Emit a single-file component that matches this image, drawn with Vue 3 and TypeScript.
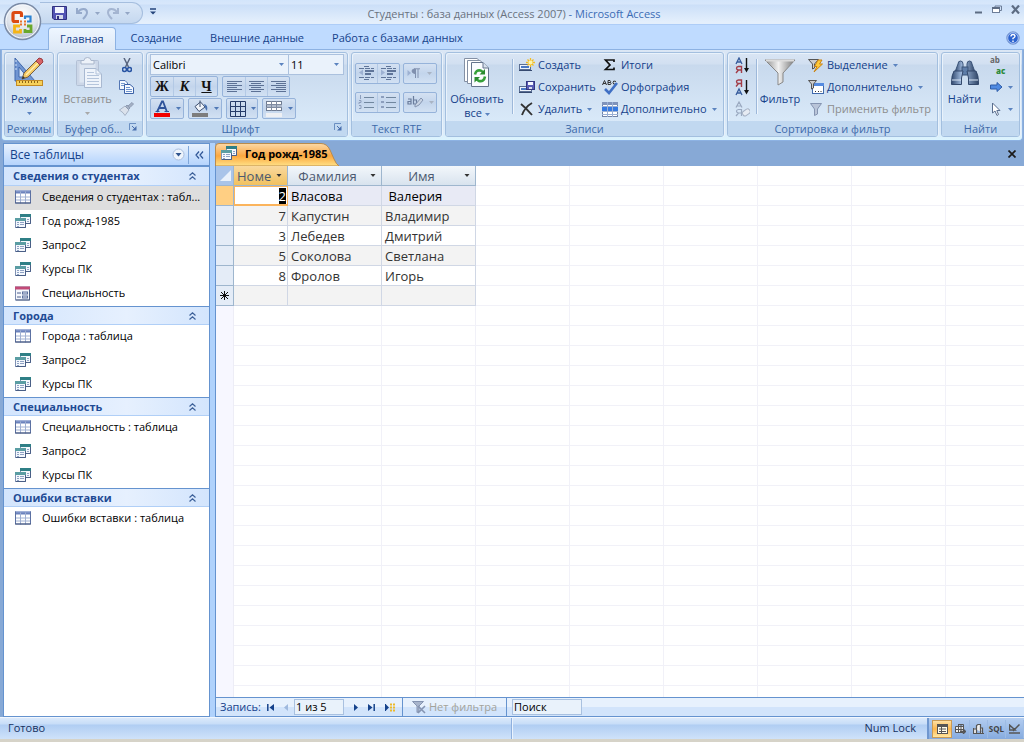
<script setup lang="ts">
import { ref } from 'vue'

interface NavItem { icon: string; text: string }
interface NavGroup { title: string; items: NavItem[] }

const tabs: string[] = ['Главная', 'Создание', 'Внешние данные', 'Работа с базами данных']
const activeTab = ref('Главная')

const groups: NavGroup[] = [
  {
    title: 'Сведения о студентах',
    items: [
      { icon: 'table', text: 'Сведения о студентах : табл...' },
      { icon: 'query', text: 'Год рожд-1985' },
      { icon: 'query', text: 'Запрос2' },
      { icon: 'query', text: 'Курсы ПК' },
      { icon: 'form', text: 'Специальность' },
    ],
  },
  {
    title: 'Города',
    items: [
      { icon: 'table', text: 'Города : таблица' },
      { icon: 'query', text: 'Запрос2' },
      { icon: 'query', text: 'Курсы ПК' },
    ],
  },
  {
    title: 'Специальность',
    items: [
      { icon: 'table', text: 'Специальность : таблица' },
      { icon: 'query', text: 'Запрос2' },
      { icon: 'query', text: 'Курсы ПК' },
    ],
  },
  {
    title: 'Ошибки вставки',
    items: [{ icon: 'table', text: 'Ошибки вставки : таблица' }],
  },
]
const selected = ref('0-0')

const columns: string[] = ['Номе', 'Фамилия', 'Имя']
const rows: [number, string, string][] = [
  [2, 'Власова', ' Валерия'],
  [7, 'Капустин', 'Владимир'],
  [3, 'Лебедев', 'Дмитрий'],
  [5, 'Соколова', 'Светлана'],
  [8, 'Фролов', 'Игорь'],
]
const position = ref('1 из 5')
const search = ref('Поиск')
</script>

<template>
  <div class="app">
    <svg class="defs" aria-hidden="true">
      <symbol id="i-table" viewBox="0 0 16 14">
        <rect x="0" y="0" width="16" height="13" fill="#fff" />
        <rect x="0" y="0" width="16" height="3" fill="#6c83bd" />
        <path d="M0 0.5H16" stroke="#8fa3d2" />
        <path d="M0 6.5H16M0 9.5H16M5.5 1V13M10.5 1V13" stroke="#9fb0d2" />
        <path d="M0.5 0V12.5H15.5V0" fill="none" stroke="#5c71a2" />
        <path d="M0 12.5H16" stroke="#46587f" />
      </symbol>
      <symbol id="i-query" viewBox="0 0 16 15">
        <rect x="5.5" y="0.5" width="10" height="9" fill="#f4f8fd" stroke="#7f91b3" />
        <rect x="5" y="0" width="11" height="3" fill="#2f7f86" />
        <path d="M12 5.5H14M12 7.5H14" stroke="#8fa2c4" />
        <path d="M15.5 3V9.5H11" fill="none" stroke="#4a5f86" />
        <rect x="0.5" y="4.5" width="10" height="9" fill="#f4f8fd" stroke="#7f91b3" />
        <rect x="0" y="4" width="11" height="3" fill="#5a9da3" />
        <path d="M2 8.5H4M5 8.5H9M2 10.5H4M5 10.5H9M2 12.5H4" stroke="#8fa2c4" />
        <path d="M10.5 7V13.5H1" fill="none" stroke="#4a5f86" />
      </symbol>
      <symbol id="i-form" viewBox="0 0 16 14">
        <rect x="0.5" y="0.5" width="14" height="13" fill="#f5f7fc" stroke="#7d8db0" />
        <rect x="0" y="0" width="15" height="3" fill="#c24a77" />
        <path d="M2 6.5H6M2 10.5H6" stroke="#4c5f8c" />
        <rect x="7.5" y="5.5" width="5" height="2" fill="#dfe6f3" stroke="#5d6f9b" />
        <rect x="7.5" y="9.5" width="5" height="2" fill="#dfe6f3" stroke="#5d6f9b" />
        <path d="M14.5 3V13.5H1" fill="none" stroke="#4e5f83" />
      </symbol>
      <symbol id="i-down" viewBox="0 0 5 3"><path d="M0 0H5L2.5 3Z" fill="currentColor" /></symbol>
      <symbol id="i-up2" viewBox="0 0 7 8">
        <path d="M0.5 3.5L3.5 0.8L6.5 3.5M0.5 7.5L3.5 4.8L6.5 7.5" fill="none" stroke="#3c6099" stroke-width="1.2" />
      </symbol>
      <symbol id="i-launch" viewBox="0 0 8 8">
        <path d="M0.5 7V0.5H7" fill="none" stroke="#6a8fc2" />
        <path d="M3 3L6 6" stroke="#486fae" /><path d="M7.5 3V7.5H3Z" fill="#486fae" />
      </symbol>
      <symbol id="i-floppy" viewBox="0 0 15 14">
        <path d="M0.5 0.5H14.5V13.5H2L0.5 12Z" fill="#5254b4" stroke="#30317f" />
        <rect x="3" y="1" width="9" height="6" fill="#f2f5ff" /><rect x="4" y="9" width="7" height="4" fill="#d5daea" />
        <rect x="5" y="10" width="2" height="3" fill="#30317f" />
      </symbol>
    </svg>

    <header class="titlebar">
      <div class="qat">
        <button class="bare" aria-label="Сохранить файл"><svg width="15" height="14"><use href="#i-floppy" /></svg></button>
        <button class="bare undo" aria-label="Отменить"><svg width="13" height="13" viewBox="0 0 13 13"><path d="M1 1V6H6" fill="none" stroke="#96aacb" stroke-width="2" /><path d="M2 5C5 1 11 1 11 5.5C11 8 9 10 7 12" fill="none" stroke="#96aacb" stroke-width="2" /></svg></button>
        <svg class="dim" width="5" height="3"><use href="#i-down" /></svg>
        <button class="bare" aria-label="Вернуть"><svg width="13" height="13" viewBox="0 0 13 13"><path d="M12 1V6H7" fill="none" stroke="#a4b5d1" stroke-width="2" /><path d="M11 5C8 1 2 1 2 5.5C2 8 4 10 6 12" fill="none" stroke="#a4b5d1" stroke-width="2" /></svg></button>
        <svg class="dim" width="5" height="3"><use href="#i-down" /></svg>
      </div>
      <button class="bare more" aria-label="Настройка панели"><svg width="6" height="7" viewBox="0 0 6 7"><path d="M0 1H6" stroke="#25457b" stroke-width="1.5" /><path d="M0 3.5H6L3 6.5Z" fill="#25457b" /></svg></button>
      <h1><span>Студенты : база данных (Access 2007)</span> - Microsoft Access</h1>
      <div class="window">
        <button class="bare" aria-label="Свернуть"><svg width="9" height="9" viewBox="0 0 9 9"><path d="M1 7.5H8" stroke="#5d6c83" stroke-width="2" /></svg></button>
        <button class="bare" aria-label="Восстановить"><svg width="10" height="9" viewBox="0 0 10 9"><path d="M3 2V1H9.5V5.5H8" fill="none" stroke="#6c7d98" /><rect x="0.5" y="3.5" width="7" height="4" fill="#fff" stroke="#6c7d98" /><path d="M0 3H8" stroke="#5d6c83" stroke-width="2" /></svg></button>
        <button class="bare" aria-label="Закрыть"><svg width="9" height="9" viewBox="0 0 9 9"><path d="M1 0.5L8 8.5M8 0.5L1 8.5" stroke="#5d6c83" stroke-width="2.2" /></svg></button>
      </div>
    </header>

    <button class="orb" aria-label="Кнопка Office">
      <svg width="39" height="39" viewBox="0 0 39 39">
        <defs><radialGradient id="orb" cx="50%" cy="30%" r="75%"><stop offset="0" stop-color="#fff" /><stop offset="0.6" stop-color="#dde2ea" /><stop offset="1" stop-color="#a4afc0" /></radialGradient></defs>
        <circle cx="19.5" cy="19.5" r="18" fill="url(#orb)" stroke="#7b8ba6" stroke-width="1.5" />
        <circle cx="19.5" cy="19.5" r="16.5" fill="none" stroke="#f6f9fe" />
        <path d="M16 19.5H11.5Q10 19.5 10 18V12Q10 10.5 11.5 10.5H17Q18.5 10.5 18.5 12V15" fill="none" stroke="#dc4a12" stroke-width="3.2" />
        <path d="M22 17V14.5H27.5V19.5H24" fill="none" stroke="#2d83d2" stroke-width="2.2" />
        <path d="M17 24H11.5V30H17.5V27" fill="none" stroke="#f5b417" stroke-width="2.8" />
        <path d="M24 24H28V29.5H22V27" fill="none" stroke="#6aa82b" stroke-width="2.8" />
        <path d="M17 19.5H19M21 19.5H23M17 22.5H19M21 22.5H23" stroke="#e8722a" stroke-width="2" />
      </svg>
    </button>

    <nav class="tabs">
      <button v-for="t in tabs" :key="t" :class="{ active: t === activeTab }" @click="activeTab = t">{{ t }}</button>
      <button class="bare help" aria-label="Справка"><svg width="14" height="14" viewBox="0 0 14 14"><circle cx="7" cy="7" r="6.3" fill="#2c63cf" stroke="#8aa6d6" /><circle cx="7" cy="7" r="5.3" fill="none" stroke="#e4eeff" stroke-width="0.7" /><path d="M5 5.5Q5 3.5 7 3.5T9 5.3Q9 6.3 7 7.3V8.3M7 9.5V11" fill="none" stroke="#fff" stroke-width="1.4" /></svg></button>
    </nav>

    <div class="ribbon">
      <section class="grp modes">
        <div class="body">
          <button class="big">
            <svg width="32" height="32" viewBox="0 0 32 32"><path d="M2 1L22 24H2Z" fill="#7095d2" stroke="#4068ac" /><path d="M6 10L14 20H6Z" fill="#dae7f7" stroke="#4068ac" /><path d="M2 4H4M2 8H4M2 12H4" stroke="#d6e4f7" /><rect x="3.5" y="23.5" width="26" height="5" fill="#f6d05a" stroke="#c28a25" /><path d="M6.5 24V26M9.5 24V26M12.5 24V26M15.5 24V26M18.5 24V26M21.5 24V26M24.5 24V26" stroke="#8b6416" /><path d="M9 22L11 16L25 2L29 6L15 20Z" fill="#f3c763" stroke="#735e47" /><path d="M13 18L26 5" stroke="#fff0b0" stroke-width="1.5" /><path d="M23 4L27 8L30 5Q30 1 26 1Z" fill="#d66467" stroke="#9b3e43" /><path d="M9 22L10 19L12 21Z" fill="#333" /></svg>
            <span>Режим</span><svg class="arr" width="5" height="3"><use href="#i-down" /></svg>
          </button>
        </div>
        <footer>Режимы</footer>
      </section>

      <section class="grp clip">
        <div class="body">
          <button class="big off" disabled>
            <svg width="32" height="32" viewBox="0 0 32 32"><rect x="4.5" y="3.5" width="22" height="25" rx="1" fill="#ccd7e8" stroke="#b3c0d5" /><rect x="7.5" y="6.5" width="16" height="19" fill="#dde6f2" /><path d="M9 3.5H12Q12 0.5 15.5 0.5T19 3.5H22V7H9Z" fill="#edf2f9" stroke="#a9b6cb" /><path d="M12.5 11.5H24L29.5 17V30.5H12.5Z" fill="#eff4fb" stroke="#a9b9d1" /><path d="M24 11.5V17H29.5M15 15.5H22M15 18.5H27M15 21.5H27M15 24.5H27M15 27.5H27" fill="none" stroke="#b5c5dc" /></svg>
            <span>Вставить</span><svg class="arr" width="5" height="3"><use href="#i-down" /></svg>
          </button>
          <div class="tools">
            <button class="bare" aria-label="Вырезать"><svg width="10" height="15" viewBox="0 0 10 15"><path d="M2 0L6.5 9M8 0L3.5 9" stroke="#5a6780" stroke-width="1.5" /><circle cx="2.5" cy="11.5" r="2" fill="none" stroke="#2854a3" stroke-width="1.6" /><circle cx="7.5" cy="11.5" r="2" fill="none" stroke="#2854a3" stroke-width="1.6" /></svg></button>
            <button class="bare" aria-label="Копировать"><svg width="15" height="14" viewBox="0 0 15 14"><path d="M0.5 0.5H6L8.5 3V9.5H0.5Z" fill="#f5f9ff" stroke="#5376b4" /><path d="M2 3.5H6M2 5.5H6" stroke="#779bd0" /><path d="M5.5 4.5H11L14.5 7.5V13.5H5.5Z" fill="#f5f9ff" stroke="#3c62a7" /><path d="M7 7.5H11M7 9.5H13M7 11.5H13" stroke="#6d93cd" /></svg></button>
            <button class="bare" aria-label="Формат по образцу"><svg width="15" height="14" viewBox="0 0 15 14"><path d="M0.5 8L6 4L10 8L6 13.5Q5 11 0.5 8Z" fill="#dbe2ec" stroke="#a6b2c5" /><path d="M6.5 4.5L8 3L11 6L9.5 7.5ZM9 4L13 0.5L14.5 2L11 5.5" fill="#a5b1c4" stroke="#8d9bb3" /></svg></button>
          </div>
        </div>
        <footer><span>Буфер об...</span><svg width="8" height="8"><use href="#i-launch" /></svg></footer>
      </section>

      <section class="grp font">
        <div class="body stack">
          <div class="line combos">
            <label class="combo family"><select aria-label="Шрифт"><option>Calibri</option></select><svg width="5" height="3"><use href="#i-down" /></svg></label>
            <label class="combo size"><select aria-label="Размер"><option>11</option></select><svg width="5" height="3"><use href="#i-down" /></svg></label>
          </div>
          <div class="line">
            <div class="seg"><button class="b">Ж</button><button class="b i">К</button><button class="b u">Ч</button></div>
            <div class="seg">
              <button aria-label="По левому краю"><svg width="15" height="12" viewBox="0 0 15 12"><path d="M0 .5H15M0 2.5H10M0 4.5H15M0 6.5H10M0 8.5H15M0 10.5H10" stroke="#5c7195" /></svg></button>
              <button aria-label="По центру"><svg width="15" height="12" viewBox="0 0 15 12"><path d="M0 .5H15M2 2.5H12M0 4.5H15M2 6.5H12M0 8.5H15M2 10.5H12" stroke="#5c7195" /></svg></button>
              <button aria-label="По правому краю"><svg width="15" height="12" viewBox="0 0 15 12"><path d="M0 .5H15M5 2.5H15M0 4.5H15M5 6.5H15M0 8.5H15M5 10.5H15" stroke="#5c7195" /></svg></button>
            </div>
          </div>
          <div class="line">
            <button class="split" aria-label="Цвет шрифта"><svg width="17" height="17" viewBox="0 0 17 17"><path d="M3 12L8 1.5H9L13 12M5.5 8H11" fill="none" stroke="#30549b" stroke-width="1.8" /><path d="M1.5 11.5H5.5M10.5 11.5H15" stroke="#30549b" /><rect x="0" y="13" width="16" height="4" fill="#f20000" /></svg><svg width="5" height="3"><use href="#i-down" /></svg></button>
            <button class="split" aria-label="Цвет заливки"><svg width="17" height="17" viewBox="0 0 17 17"><path d="M3 6.5L8.5 2L13 7L7 11.5Z" fill="#f0f4fa" stroke="#3f5070" /><path d="M8 7V0.5" stroke="#3f5070" /><path d="M12 4Q16.5 5 15 11Q13 9 13 7Z" fill="#476fae" /><rect x="0" y="13" width="16" height="4" fill="#7d7d7d" /></svg><svg width="5" height="3"><use href="#i-down" /></svg></button>
            <button class="split narrow" aria-label="Сетка"><svg width="17" height="16" viewBox="0 0 17 16"><path d="M0.5 0.5H15.5V15.5H0.5ZM5.5 0V16M10.5 0V16M0 5.5H16M0 10.5H16" fill="none" stroke="#263c69" /></svg><svg width="5" height="3"><use href="#i-down" /></svg></button>
            <button class="split" aria-label="Цвет строк"><svg width="17" height="17" viewBox="0 0 17 17"><rect x="0.5" y="1.5" width="15" height="9" fill="#fff" stroke="#6f7c92" /><rect x="1" y="5" width="15" height="3" fill="#aeb9cb" /><path d="M0 4.5H16M0 7.5H16M5.5 1V11M10.5 1V11" stroke="#7f8ba1" /><rect x="0" y="13" width="16" height="4" fill="#eef0f4" /></svg><svg width="5" height="3"><use href="#i-down" /></svg></button>
          </div>
        </div>
        <footer><span>Шрифт</span><svg width="8" height="8"><use href="#i-launch" /></svg></footer>
      </section>

      <section class="grp rtf">
        <div class="body rtfgrid">
          <div class="seg">
            <button disabled aria-label="Уменьшить отступ"><svg width="17" height="15" viewBox="0 0 17 15"><path d="M6 .5H11M1 2.5H16M1 11.5H16M6 13.5H11" stroke="#5f7599" stroke-dasharray="5 1" /><path d="M7 5H16M7 8H13" stroke="#5f7599" stroke-width="2" /><path d="M5 3.5V9.5L1 6.5Z" fill="#9db1d2" /></svg></button>
            <button disabled aria-label="Увеличить отступ"><svg width="17" height="15" viewBox="0 0 17 15"><path d="M6 .5H11M1 2.5H16M1 11.5H16M6 13.5H11" stroke="#5f7599" stroke-dasharray="5 1" /><path d="M7 5H16M7 8H13" stroke="#5f7599" stroke-width="2" /><path d="M1 3.5V9.5L5 6.5Z" fill="#9db1d2" /></svg></button>
          </div>
          <button class="split off" disabled aria-label="Направление текста"><svg width="15" height="11" viewBox="0 0 15 11"><path d="M0.5 2V8L4 5Z" fill="#9db1d2" /><path d="M8 1Q5 1 5 3T8 5.5ZM8.5 1V10M11 1V10M7 .8H13" fill="#8090ae" stroke="#8090ae" /></svg><svg width="5" height="3"><use href="#i-down" /></svg></button>
          <div class="seg">
            <button disabled aria-label="Нумерация"><svg width="17" height="14" viewBox="0 0 17 14"><path d="M6 2.5H16M6 7.5H16M6 12.5H16" stroke="#71879f" /><path d="M2.5 0V4M1 5.5H3V7.5H1V9M1 10.5H3V13.5H1" fill="none" stroke="#8c9ebd" /></svg></button>
            <button disabled aria-label="Маркеры"><svg width="17" height="14" viewBox="0 0 17 14"><path d="M6 2.5H16M6 7.5H16M6 12.5H16" stroke="#71879f" /><path d="M1 2H4M1 7H4M1 12H4" stroke="#8c9ebd" stroke-width="2" /></svg></button>
          </div>
          <button class="split off" disabled aria-label="Выделение цветом"><svg width="17" height="13" viewBox="0 0 17 13"><path d="M1 3H4V8H1V5.5H4M6.5 0V8H9.5V4H6.5" fill="none" stroke="#6a7c9c" stroke-width="1.2" /><path d="M8 9L14 2L16 4L12 9L8 11Z" fill="#c9d4e4" stroke="#8595b1" /></svg><svg width="5" height="3"><use href="#i-down" /></svg></button>
        </div>
        <footer>Текст RTF</footer>
      </section>

      <section class="grp records">
        <div class="body">
          <button class="big">
            <svg width="26" height="32" viewBox="0 0 26 32"><path d="M0.5 1.5H13L17 5V24.5H0.5Z" fill="#fff" stroke="#8490a4" /><path d="M3.5 3.5H16L20 7V26.5H3.5Z" fill="#fff" stroke="#8490a4" /><path d="M7.5 5.5H19L24.5 11V29.5H7.5Z" fill="#fafcff" stroke="#64748d" /><path d="M19 5.5V11H24.5" fill="#d8e1ec" stroke="#64748d" /><path d="M11 17.5Q12 12.5 16.5 13.5L19 15M21 19.5Q20 25 15 24L12 22" fill="none" stroke="#35a039" stroke-width="2.6" /><path d="M21 12V17.5H15.5ZM10.5 25.5V20H16Z" fill="#2a8b30" /></svg>
            <span>Обновить<br>все <svg class="arr" width="5" height="3"><use href="#i-down" /></svg></span>
          </button>
          <i class="rule"></i>
          <div class="cmds c1">
            <button><svg width="16" height="14" viewBox="0 0 16 14"><rect x="0.5" y="6.5" width="11" height="5" fill="#edf3fb" stroke="#5a6e93" /><rect x="2" y="8" width="8" height="2" fill="#4a78c4" /><path d="M0 12.5H13" stroke="#35496f" /><path d="M11.5 0V9M7 4.5H16M8.5 1.5L14.5 7.5M14.5 1.5L8.5 7.5" stroke="#f3bd23" stroke-width="1.3" /><circle cx="11.5" cy="4.5" r="2" fill="#fff4ac" /></svg>Создать</button>
            <button><svg width="16" height="14" viewBox="0 0 16 14"><rect x="0.5" y="6.5" width="12" height="5" fill="#edf3fb" stroke="#5a6e93" /><rect x="2" y="8" width="7" height="2" fill="#4a78c4" /><path d="M0 12.5H13" stroke="#35496f" /><rect x="7.5" y="1.5" width="8" height="8" fill="#5a5cb5" stroke="#34377f" /><rect x="9" y="2" width="5" height="3" fill="#f5f7ff" /><rect x="10" y="7" width="3" height="2" fill="#d8ddea" /></svg>Сохранить</button>
            <button><svg width="16" height="14" viewBox="0 0 16 14"><path d="M2 2Q7 6 13 13M13 1Q6 5 3 13" fill="none" stroke="#333" stroke-width="1.9" /></svg>Удалить<svg class="arr" width="5" height="3"><use href="#i-down" /></svg></button>
          </div>
          <div class="cmds c2">
            <button><svg width="16" height="14" viewBox="0 0 16 14"><path d="M12 4V2H3.5L8 7L3.5 11.5H12V9.5" fill="none" stroke="#111" stroke-width="1.7" /></svg>Итоги</button>
            <button><svg width="16" height="15" viewBox="0 0 16 15"><path d="M0.5 5L2.5 .5L4.5 5M1 3.5H4M6 .5V4.5H8.5Q9.5 3.5 8.5 2.5H6M6 .5H8Q9 1.5 8.5 2.5M14 1.5Q11 0 11 2.5T14 4" fill="none" stroke="#333" /><path d="M3 9L7 13L15 3" fill="none" stroke="#3f6fc4" stroke-width="2.6" /></svg>Орфография</button>
            <button><svg width="16" height="15" viewBox="0 0 16 15"><rect x="0.5" y="0.5" width="15" height="14" fill="#fff" stroke="#6f83a8" /><rect x="0" y="0" width="16" height="3" fill="#7f93bb" /><rect x="0" y="5" width="16" height="4" fill="#3579e0" /><path d="M0 4.5H16M0 9.5H16M0 12.5H16M5.5 0V15M10.5 0V15" stroke="#9bb0d4" /></svg>Дополнительно<svg class="arr" width="5" height="3"><use href="#i-down" /></svg></button>
          </div>
        </div>
        <footer>Записи</footer>
      </section>

      <section class="grp sort">
        <div class="body">
          <div class="tools">
            <button class="bare" aria-label="По возрастанию"><svg width="15" height="17" viewBox="0 0 15 17"><path d="M1 7L4 1L7 7M2 5H6" fill="none" stroke="#365b9c" stroke-width="1.3" /><path d="M1 16L3.5 13M6.5 16V9.5H3.5Q1.5 9.7 1.5 11.2T3.5 13H6" fill="none" stroke="#a23d48" stroke-width="1.4" /><path d="M11.5 1V13" stroke="#111" stroke-width="1.4" /><path d="M9 11H14L11.5 15.5Z" fill="#111" /></svg></button>
            <button class="bare" aria-label="По убыванию"><svg width="15" height="17" viewBox="0 0 15 17"><path d="M1 7.5L3.5 4.5M6.5 8V1H3.5Q1.5 1.2 1.5 2.7T3.5 4.5H6" fill="none" stroke="#a23d48" stroke-width="1.4" /><path d="M1 16L4 10L7 16M2 14H6" fill="none" stroke="#365b9c" stroke-width="1.3" /><path d="M11.5 1V13" stroke="#111" stroke-width="1.4" /><path d="M9 11H14L11.5 15.5Z" fill="#111" /></svg></button>
            <button class="bare" aria-label="Очистить сортировку"><svg width="15" height="17" viewBox="0 0 15 17"><path d="M1 6.5L4 1L7 6.5M2 5H6M1 15L3.5 12M6.5 15V8.5H3.5Q1.5 8.7 1.5 10.2T3.5 12H6" fill="none" stroke="#9aa9c0" stroke-width="1.2" /><rect x="7" y="9" width="8" height="5" rx="2" transform="rotate(-35 11 11)" fill="#e6ebf3" stroke="#a5b1c4" /></svg></button>
          </div>
          <i class="rule"></i>
          <button class="big">
            <svg width="32" height="32" viewBox="0 0 32 32"><defs><linearGradient id="fun"><stop offset="0" stop-color="#8e8e8e" /><stop offset="0.45" stop-color="#f1f1f1" /><stop offset="1" stop-color="#777" /></linearGradient></defs><path d="M1 3H31L19 16V25L14 28V16Z" fill="url(#fun)" stroke="#888" /><path d="M2 3.5H30" stroke="#dcdcdc" stroke-width="2" /></svg>
            <span>Фильтр</span>
          </button>
          <div class="cmds">
            <button><svg width="16" height="15" viewBox="0 0 16 15"><path d="M0.5 1.5H10.5L6.5 6V10L4.5 11V6Z" fill="#ccc" stroke="#555" /><path d="M10 2H14L11.5 6H14.5L6 14L9 8.5H6.5Z" fill="#ffc938" stroke="#c98314" /></svg>Выделение<svg class="arr" width="5" height="3"><use href="#i-down" /></svg></button>
            <button><svg width="16" height="15" viewBox="0 0 16 15"><rect x="4.5" y="3.5" width="11" height="10" fill="#fff" stroke="#3f69ad" /><rect x="4" y="3" width="12" height="3" fill="#558be0" /><path d="M7 11.5H8M10 11.5H11M12.5 11.5H13.5" stroke="#333" /><path d="M0.5 .5H8.5L5.5 4V8L3.5 9V4Z" fill="#ccc" stroke="#555" /></svg>Дополнительно<svg class="arr" width="5" height="3"><use href="#i-down" /></svg></button>
            <button class="off" disabled><svg width="16" height="15" viewBox="0 0 16 15"><path d="M2.5 1.5H13.5L9.5 7V12L6.5 13.5V7Z" fill="#b9c4d8" stroke="#8594b1" /></svg>Применить фильтр</button>
          </div>
        </div>
        <footer>Сортировка и фильтр</footer>
      </section>

      <section class="grp find">
        <div class="body">
          <button class="big">
            <svg width="28" height="32" viewBox="0 0 28 32"><defs><linearGradient id="bin"><stop offset="0" stop-color="#31496f" /><stop offset="0.4" stop-color="#a9c3e6" /><stop offset="1" stop-color="#2f4567" /></linearGradient></defs><path d="M7 7Q7 4 9.5 4T12 7V15H4ZM16 7Q16 4 18.5 4T21 7L24 15H16Z" fill="url(#bin)" stroke="#3b5479" /><rect x="11" y="10" width="6" height="8" fill="#5e7da8" stroke="#3b5479" /><path d="M3 14Q0.5 18 0.5 26V27.5H10.5V21L12 14ZM25 14Q27.5 18 27.5 26V27.5H17.5V21L16 14Z" fill="url(#bin)" stroke="#34496c" /><path d="M1 23H10M18 23H27" stroke="#dbe7f6" /></svg>
            <span>Найти</span>
          </button>
          <div class="tools">
            <button class="bare ab"><span>ab</span><b>ac</b></button>
            <button class="bare" aria-label="Перейти"><svg width="13" height="10" viewBox="0 0 13 10"><path d="M0.5 3H7V0.5L12 5L7 9.5V7H0.5Z" fill="#4f8ae2" stroke="#2e5ca8" /></svg><svg class="arr" width="5" height="3"><use href="#i-down" /></svg></button>
            <button class="bare" aria-label="Выделить"><svg width="13" height="14" viewBox="0 0 13 14"><path d="M2.5 1V11L5 9L7 13.5L8.5 12.5L6.8 8.5H10Z" fill="#fff" stroke="#5b6f8f" /></svg><svg class="arr" width="5" height="3"><use href="#i-down" /></svg></button>
          </div>
        </div>
        <footer>Найти</footer>
      </section>
    </div>

    <main>
      <aside>
        <div class="panehead">
          <h2>Все таблицы</h2>
          <button class="bare" aria-label="Меню"><svg width="13" height="13" viewBox="0 0 13 13"><circle cx="6.5" cy="6.5" r="5.5" fill="#eef4fc" stroke="#a9bddd" /><path d="M3.5 5H9.5L6.5 8.5Z" fill="#31558f" /></svg></button>
          <i></i>
          <button class="bare" aria-label="Скрыть панель"><svg width="9" height="8" viewBox="0 0 9 8"><path d="M4 .5L1 4L4 7.5M8 .5L5 4L8 7.5" fill="none" stroke="#2f5596" stroke-width="1.2" /></svg></button>
        </div>
        <section v-for="(g, gi) in groups" :key="g.title">
          <h3>{{ g.title }}<svg width="7" height="8"><use href="#i-up2" /></svg></h3>
          <button v-for="(it, ii) in g.items" :key="ii" :class="{ sel: selected === `${gi}-${ii}` }" @click="selected = `${gi}-${ii}`">
            <svg width="16" height="15"><use :href="`#i-${it.icon}`" /></svg><span>{{ it.text }}</span>
          </button>
        </section>
      </aside>

      <div class="doc">
        <div class="doctabs">
          <svg class="tabshape" width="124" height="23" viewBox="0 0 124 23" aria-hidden="true">
            <defs><linearGradient id="tabg" x2="0" y2="1"><stop offset="0" stop-color="#fcd9a6" /><stop offset="0.45" stop-color="#fbb055" /><stop offset="0.55" stop-color="#fba83f" /><stop offset="1" stop-color="#ffe187" /></linearGradient></defs>
            <path d="M0.5 23V4Q0.5 0.5 4 0.5H106Q112 0.5 115 7L119 16Q121 21 124 23Z" fill="url(#tabg)" stroke="#b98b4d" />
          </svg>
          <button class="doctab"><svg width="16" height="15"><use href="#i-query" /></svg>Год рожд-1985</button>
          <button class="bare close" aria-label="Закрыть вкладку"><svg width="8" height="8" viewBox="0 0 8 8"><path d="M.5 .5L7.5 7.5M7.5 .5L.5 7.5" stroke="#1b1b1b" stroke-width="1.7" /></svg></button>
        </div>
        <div class="sheet">
          <table>
            <thead>
              <tr>
                <th class="corner"><svg width="11" height="11" viewBox="0 0 11 11"><path d="M11 0V11H0Z" fill="#e9f1fb" /></svg></th>
                <th v-for="(c, i) in columns" :key="c" :class="{ hot: i === 0 }"><div><span>{{ c }}</span><svg width="6" height="3"><use href="#i-down" /></svg></div></th>
              </tr>
            </thead>
            <tbody>
              <tr v-for="(r, i) in rows" :key="i" :class="{ cur: i === 0 }">
                <th></th><td class="num"><span>{{ r[0] }}</span></td><td>{{ r[1] }}</td><td>{{ r[2] }}</td>
              </tr>
              <tr><th><svg width="9" height="9" viewBox="0 0 9 9"><path d="M4.5 0V9M0 4.5H9M1 1L8 8M8 1L1 8" stroke="#111" /></svg></th><td></td><td></td><td></td></tr>
            </tbody>
          </table>
        </div>
        <div class="recnav">
          <label for="pos">Запись:</label>
          <button class="bare" aria-label="Первая"><svg width="7" height="7" viewBox="0 0 7 7"><path d="M.8 0V7" stroke="#15428b" stroke-width="1.5" /><path d="M7 0V7L2.5 3.5Z" fill="#15428b" /></svg></button>
          <button class="bare" aria-label="Предыдущая"><svg width="4" height="7" viewBox="0 0 4 7"><path d="M4 0V7L0 3.5Z" fill="#9fb9de" /></svg></button>
          <input id="pos" v-model="position" class="pos">
          <button class="bare" aria-label="Следующая"><svg width="4" height="7" viewBox="0 0 4 7"><path d="M0 0V7L4 3.5Z" fill="#15428b" /></svg></button>
          <button class="bare" aria-label="Последняя"><svg width="7" height="7" viewBox="0 0 7 7"><path d="M6.2 0V7" stroke="#15428b" stroke-width="1.5" /><path d="M0 0V7L4.5 3.5Z" fill="#15428b" /></svg></button>
          <button class="bare" aria-label="Новая запись"><svg width="11" height="9" viewBox="0 0 11 9"><path d="M.5 1V8" stroke="#15428b" /><path d="M1 1.5V7.5L4 4.5Z" fill="#15428b" /><path d="M5 1.5H11M5 4.5H11M5 7.5H11" stroke="#edb92a" stroke-width="2" stroke-dasharray="2 1" /></svg></button>
          <i></i>
          <button class="bare filter" disabled><svg width="14" height="13" viewBox="0 0 14 13"><path d="M0.5 0.5H11.5L7 5V10L5 11.5V5Z" fill="#a8b5cc" stroke="#8594b1" /><path d="M6 5L13 12M13 5L6 12" stroke="#8594b1" stroke-width="1.6" /></svg>Нет фильтра</button>
          <i></i>
          <input v-model="search" class="search" aria-label="Поиск по записям">
        </div>
      </div>
    </main>

    <footer class="status">
      <span class="ready">Готово</span>
      <span class="lock">Num Lock</span>
      <div class="views">
        <button class="on" aria-label="Режим таблицы"><svg width="11" height="10" viewBox="0 0 11 10"><rect x="0.5" y="0.5" width="10" height="9" fill="#fffbe9" stroke="#555" /><path d="M0 2H11" stroke="#555" stroke-width="2" /><path d="M2 5H4M5 5H9M2 7.5H4M5 7.5H9M4.5 3V9" stroke="#555" /></svg></button>
        <button aria-label="Сводная таблица"><svg width="11" height="10" viewBox="0 0 11 10"><rect x="0.5" y="2.5" width="8" height="6" fill="#eee" /><path d="M3.5 .5H8.5V8.5H.5V2.5H8.5M3.5 0V8M6 0V8M0 5.5H8" fill="none" stroke="#555" /><path d="M5 7.5H10M8 5L10.5 7.5L8 10" fill="none" stroke="#555" stroke-width="1.3" /></svg></button>
        <button aria-label="Сводная диаграмма"><svg width="11" height="10" viewBox="0 0 11 10"><path d="M3.5 9V1.5L5 .5H7.5V9M7.5 4H9.5V9M.5 4V9.5H11M.5 5H3" fill="#eee" stroke="#555" stroke-width="1.2" /></svg></button>
        <button class="sql">SQL</button>
        <button aria-label="Конструктор"><svg width="11" height="10" viewBox="0 0 11 10"><path d="M.5 1V6H6ZM4 7L10.5 .5M0 9H11" fill="none" stroke="#555" stroke-width="1.5" /></svg></button>
      </div>
    </footer>
  </div>
</template>

<style>
body { margin: 0; }
</style>

<style scoped>
* { box-sizing: border-box; }
.app {
  position: relative;
  display: flex;
  flex-direction: column;
  height: 100vh;
  overflow: hidden;
  background: #87a9d6;
  color: #15428b;
  font: 11px/16px "Open Sans", "Noto Sans", sans-serif;
}
.defs { position: absolute; width: 0; height: 0; }
button, input, select { font: inherit; color: inherit; margin: 0; }
button { padding: 0; border: 0; background: none; white-space: nowrap; }
svg { flex: none; display: block; }
h1, h2, h3 { margin: 0; font: inherit; }
.bare { display: flex; align-items: center; }
.arr { color: #5b83bf; }

.titlebar {
  display: flex;
  flex: none;
  height: 25px;
  border-bottom: 1px solid #aecdf7;
  background: linear-gradient(#d3e5fb 0, #d8e7fb 4px, #cbdff8 5px, #e4effc 22px, #e4effc 100%);
}
.qat {
  display: flex;
  align-items: center;
  gap: 6px;
  height: 22px;
  margin: 2px 0 0 40px;
  padding: 0 12px;
  border: 1px solid #a5bede;
  border-left: 0;
  border-radius: 0 11px 11px 0;
  background: linear-gradient(#dbe8f8, #c5d8ef);
}
.undo { margin-left: 3px; }
.dim { color: #93a6c5; }
.more { margin: 0 0 2px 7px; }
.titlebar h1 { flex: 1; padding: 6px 0 0; text-align: center; color: #3b6cb5; }
.titlebar h1 span { color: #6a737f; }
.window { display: flex; justify-content: flex-end; gap: 9px; width: 152px; height: 18px; padding: 0 4px; }
.orb { position: absolute; top: 2px; left: 3px; z-index: 2; }

.tabs { display: flex; flex: none; height: 25px; padding: 2px 4px 0 48px; background: #bfdbff; border-bottom: 1px solid #8db2e3; }
.tabs button { padding: 0 14px; }
.tabs button.active {
  height: 23px;
  margin-right: 1px;
  padding: 0 11px;
  border: 1px solid #8db2e3;
  border-bottom: 0;
  border-radius: 4px 4px 0 0;
  background: linear-gradient(#eef6ff, #dde8f6);
}
.tabs .help { margin-left: auto; padding: 0; }

.ribbon {
  display: flex;
  flex: none;
  gap: 3px;
  height: 91px;
  margin: 0 1px;
  padding: 2px 2px 3px;
  border: 1px solid #8db2e3;
  border-top: 0;
  border-radius: 0 0 4px 4px;
  background: linear-gradient(#dbe7f5 0, #d2e0f1 14px, #c8d9ed 15px, #dcecfb 82px, #dbf4fe 100%);
}
.grp { display: flex; flex-direction: column; flex: none; border: 1px solid #a3bfdf; border-radius: 3px; box-shadow: inset 1px 1px 0 #e9f2fb, 1px 0 0 #e9f2fb; overflow: hidden; }
.grp footer { display: flex; align-items: center; justify-content: center; flex: none; height: 15px; background: #c1d8f0; color: #3e6aaa; }
.grp footer span { flex: 1; text-align: center; }
.grp footer svg { margin: 0 5px 3px 0; }
.body { display: flex; flex: 1; min-height: 0; }
.modes { width: 50px; }
.clip { width: 86px; }
.font { width: 202px; }
.rtf { width: 91px; }
.records { width: 279px; }
.sort { width: 211px; }
.find { flex: 1 0 79px; }

.big { display: flex; flex-direction: column; align-items: center; flex: 1; padding-top: 4px; gap: 3px; }
.big .arr { margin-top: 3px; }
.big span .arr { display: inline-block; margin: 0; vertical-align: middle; }
.big span { line-height: 14px; }
.off { color: #8d8d8d; }
.off .arr { color: #a8a8a8; }
.tools { display: flex; flex-direction: column; justify-content: space-around; padding: 1px 6px; }
.tools button { height: 22px; justify-content: center; }
.clip .tools { padding: 1px 8px 1px 2px; }
.rule { flex: none; width: 2px; margin: 6px 4px 7px; border-left: 1px solid #9db8da; border-right: 1px solid #eef5fd; }
.cmds { display: flex; flex-direction: column; justify-content: space-around; padding: 1px 0; }
.cmds button { display: flex; align-items: center; gap: 3px; height: 22px; }
.cmds .arr { margin-left: 2px; }
.records .big { flex: 0 0 62px; }
.records .cmds { flex: none; margin-left: 1px; }
.records .c1 { width: 82px; }
.sort .tools { padding: 1px 2px 1px 7px; }
.sort .rule { margin-right: 0; }
.sort .big { flex: 0 0 44px; }
.sort .cmds { margin-left: 6px; }
.find .tools { width: 32px; padding: 1px 3px 1px 0; }
.find .tools button { gap: 5px; }
.find .tools .ab { flex-direction: column; align-items: flex-start; gap: 0; padding-left: 3px; font: bold 8px/11px "Open Sans", sans-serif; color: #666; }
.ab b { padding-left: 6px; color: #2d8a3c; }

.stack { flex-direction: column; padding: 1px 3px; gap: 1px; }
.line { display: flex; flex: none; gap: 4px; height: 21px; }
.line.combos { gap: 0; }
.combo { display: grid; align-items: center; border: 1px solid #abc1de; background: #eaf2fb; }
.combo + .combo { border-left: 0; }
.combo select { grid-area: 1 / 1; width: 100%; height: 19px; padding: 0 2px; border: 0; background: none; appearance: none; color: #000; }
.combo svg { grid-area: 1 / 1; justify-self: end; margin-right: 4px; color: #5b83bf; pointer-events: none; }
.family { width: 139px; }
.size { width: 55px; }
.seg { display: flex; border: 1px solid #96b3da; border-radius: 2px; background: linear-gradient(#d4e1f2, #c3d5ec 50%, #d2e1f3); }
.seg button { display: flex; align-items: center; justify-content: center; width: 22px; }
.seg button + button { border-left: 1px solid #b3c9e5; }
.b { color: #111; font: bold 14px/16px "Liberation Serif", serif; }
.i { font-style: italic; }
.u { text-decoration: underline; }
.split { display: flex; align-items: center; gap: 5px; width: 34px; height: 21px; padding: 0 3px; border: 1px solid #96b3da; border-radius: 2px; color: #4f78b5; background: linear-gradient(#d4e1f2, #c3d5ec 50%, #d2e1f3); }
.split.narrow { width: 32px; gap: 4px; }
.split.off { color: #a9b4c4; }
.rtfgrid { display: grid; grid-template-columns: 45px 34px; align-content: center; gap: 8px 3px; padding: 1px 3px 0; }
.rtfgrid .seg { height: 21px; }
.rtfgrid .seg button { flex: 1; }

main { display: flex; flex: 1; min-height: 0; padding: 2px 0 0 3px; }
aside { flex: none; width: 207px; border: 1px solid #6593cf; background: #fff; overflow: hidden; }
.panehead { display: flex; align-items: center; height: 23px; padding: 0 5px 0 6px; border-bottom: 2px solid #6593cf; background: linear-gradient(#e8f1fd, #b5d4fd); }
.panehead h2 { flex: 1; font-size: 12px; }
.panehead i { width: 1px; height: 18px; margin: 0 6px 0 3px; background: #7fa6da; }
aside h3 { display: flex; align-items: center; justify-content: space-between; height: 19px; padding: 0 13px 0 9px; border-bottom: 1px solid #b0cff7; background: linear-gradient(90deg, #d3e5fd, #e6f0fe 60%, #d3e5fd); font-weight: 700; color: #1e4a94; }
aside section + section h3 { border-top: 1px solid #6593cf; }
aside section button { display: flex; align-items: center; gap: 11px; width: 100%; height: 24px; padding: 0 4px 2px 11px; color: #000; text-align: left; }
aside section span { overflow: hidden; text-overflow: ellipsis; white-space: nowrap; }
aside .sel { background: #dedede; }

.doc { display: flex; flex: 1; flex-direction: column; min-width: 0; border-left: 5px solid #b0d2fc; }
.doctabs { position: relative; display: flex; align-items: center; flex: none; height: 23px; }
.tabshape { position: absolute; left: 0; top: 0; }
.doctab { position: relative; display: flex; align-items: center; gap: 8px; padding: 0 0 2px 6px; color: #000; font-weight: 700; }
.close { margin: 0 8px 2px auto; }
.sheet {
  flex: 1;
  min-height: 0;
  border-left: 1px solid #6593cf;
  background:
    linear-gradient(90deg, #f7f7ff 17px, #ededf6 17px, #ededf6 18px, transparent 18px),
    repeating-linear-gradient(90deg, transparent 0, transparent 93px, #f1f1f8 93px, #f1f1f8 94px) 72px 0,
    repeating-linear-gradient(transparent 0, transparent 19px, #f1f1f8 19px, #f1f1f8 20px),
    #fff;
}
table { border-collapse: separate; border-spacing: 0; table-layout: fixed; width: 260px; color: #333; font-size: 13px; line-height: 18px; }
tr { height: 20px; }
th, td { height: 20px; padding: 0 3px; border-right: 1px solid #d0d7e5; border-bottom: 1px solid #d0d7e5; background: #fff; font-weight: 400; text-align: left; white-space: pre; }
thead th { width: 94px; border-color: #9eb6ce; background: linear-gradient(#f3f7fb, #d8e3ee); }
thead .corner { width: 18px; padding: 0 2px 0 4px; background: #a9c4e9; }
thead .hot { width: 54px; background: linear-gradient(#f9d99f, #f1c15f); }
thead div { display: flex; align-items: center; gap: 6px; padding-right: 2px; color: #333; }
thead div span { flex: 1; text-align: center; color: #4c5a70; }
thead .hot div { gap: 0; }
.hot div span { text-align: left; }
tbody th { padding: 0 4px; border-color: #9eb6ce; background: #e4ecf7; }
tbody tr:nth-child(even) td { background: #f3f3f3; }
.num { text-align: right; padding: 0 1px; }
tbody .cur th { background: #ffcf83; }
tbody .cur td { background: #e8eaf5; color: #000; }
tbody .cur .num { border: 1px solid #fbb45c; border-width: 1px 1px 2px; background: #fff; line-height: 16px; }
.cur .num span { display: inline-block; background: #000; color: #fff; }

.recnav { display: flex; align-items: center; flex: none; height: 20px; padding-left: 4px; border: solid #6593cf; border-width: 1px 0 1px 1px; background: linear-gradient(#e7f1fd 50%, #d2e4fb 50%); }
.recnav label { margin-right: 6px; }
.recnav i { width: 1px; height: 18px; background: #6593cf; }
.recnav button { margin-right: 10px; }
.recnav .pos + button { margin-left: 10px; }
.recnav button:has(+ i) { margin-right: 6px; }
.recnav input { height: 16px; padding: 0 1px; border: 1px solid #a9c1e0; border-radius: 0; background: #e9f2fb; color: #000; outline: 0; }
.recnav .pos { width: 50px; margin-left: -4px; }
.recnav .search { width: 70px; margin-left: 5px; }
.recnav .filter { gap: 3px; margin: 0 9px; color: #a3a39b; }

.status { display: flex; align-items: center; flex: none; height: 25px; border-top: 1px solid #f2f7fe; border-bottom: 3px solid #d6d3c8; background: linear-gradient(#dbe9fb 0, #c7ddf8 6px, #b0cdf3 7px, #cfe2fa 100%); color: #15305f; }
.status span { height: 21px; line-height: 19px; }
.ready { flex: 0 0 50%; padding-left: 8px; border-right: 1px solid #8fb0de; box-shadow: 1px 0 0 #eaf3fe; }
.lock { flex: 1; padding-right: 11px; text-align: right; }
.views { display: flex; align-items: center; height: 21px; padding: 0 0 0 3px; border-left: 2px solid #6f97cf; background: linear-gradient(#b3cdf0, #86abdf); }
.views button { display: flex; align-items: center; justify-content: center; width: 18px; height: 18px; border-right: 1px solid #9dbbe4; }
.views .on { width: 20px; background: linear-gradient(#fde0a4, #fdb64d 50%, #ffe7a2); border: 1px solid #c99a54; }
.views .sql { font: bold 8px/10px "Open Sans", sans-serif; color: #444; }
</style>
